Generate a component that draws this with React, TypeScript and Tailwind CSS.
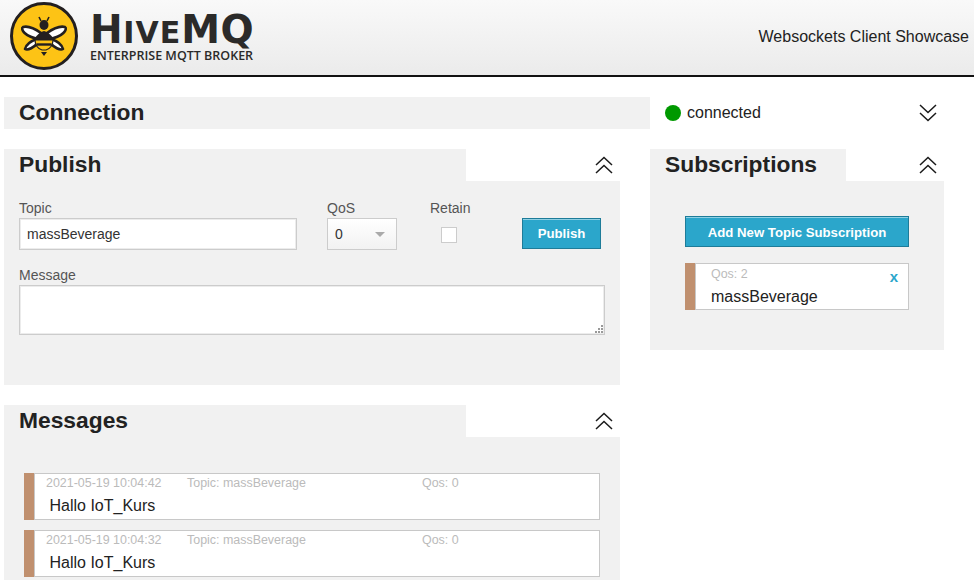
const font = "font-['Liberation_Sans',Arial,sans-serif]";

function Chevrons({ down = false }: { down?: boolean }) {
  return (
    <svg width="18" height="18" viewBox="0 0 18 18" fill="none" stroke="#1a1a1a" strokeWidth="1.5" className={down ? "rotate-180" : ""}>
      <path d="M1 9 L9 1.5 L17 9" />
      <path d="M1 17 L9 9.5 L17 17" />
    </svg>
  );
}

function Bee() {
  return (
    <svg width="68" height="68" viewBox="0 0 68 68" className="shrink-0">
      <circle cx="34" cy="34" r="32.5" fill="#fdc315" stroke="#231f20" strokeWidth="3" />
      <path d="M31 31 C24 26 17 24 13 25 C10 27 15 35 29 37 Z" fill="#fff" stroke="#231f20" strokeWidth="2.6" strokeLinejoin="round" />
      <path d="M37 31 C44 26 51 24 55 25 C58 27 53 35 39 37 Z" fill="#fff" stroke="#231f20" strokeWidth="2.6" strokeLinejoin="round" />
      <path d="M27 37 C21 39 16 43 15 47 C18 49 24 45 28 41 Z" fill="#fff" stroke="#231f20" strokeWidth="2.6" strokeLinejoin="round" />
      <path d="M41 37 C47 39 52 43 53 47 C50 49 44 45 40 41 Z" fill="#fff" stroke="#231f20" strokeWidth="2.6" strokeLinejoin="round" />
      <ellipse cx="34" cy="23" rx="4.5" ry="5" fill="#231f20" />
      <path d="M31 19 L29 15 M37 19 L39 15" stroke="#231f20" strokeWidth="1.6" />
      <path d="M34 29 C28 31 25 35 25 38 L43 38 C43 35 40 31 34 29 Z" fill="#231f20" />
      <path d="M25 38 L43 38 C43 43 40 47 36 48 L32 48 C28 47 25 43 25 38 Z" fill="#fdc315" stroke="#231f20" strokeWidth="1.2" />
      <path d="M26.5 42.5 L41.5 42.5" stroke="#231f20" strokeWidth="2.4" />
      <path d="M31 50 L37 50 L34 54 Z" fill="#231f20" />
    </svg>
  );
}

function Panel({ title, tabClass, chevronClass, bodyClass, children }: { title: string; tabClass: string; chevronClass: string; bodyClass: string; children: React.ReactNode }) {
  return (
    <section>
      <div className="flex h-8">
        <div className={`bg-[#f1f1f1] pl-[15px] flex items-start ${tabClass}`}>
          <h2 className="text-[22.8px] font-bold text-[#222] leading-[31px]">{title}</h2>
        </div>
        <div className={`flex-1 flex items-center justify-end ${chevronClass}`}>
          <Chevrons />
        </div>
      </div>
      <div className={`bg-[#f1f1f1] ${bodyClass}`}>{children}</div>
    </section>
  );
}

function Message({ time }: { time: string }) {
  return (
    <div className="h-[47px] flex border border-[#c8c8c8] border-l-0 bg-white">
      <div className="w-[11px] -my-px bg-[#c0906f] shrink-0 border-r border-[#c8c8c8]" />
      <div className="flex-1">
        <div className="flex text-[12.45px] leading-[17px] text-[#bbb] pl-[11px] h-[18px] items-center">
          <span className="w-[141px]">{time}</span>
          <span className="w-[235px]">Topic: massBeverage</span>
          <span>Qos: 0</span>
        </div>
        <div className="pl-[15px] pt-[3px] text-[16px] leading-[22px] text-[#222] -ml-[0.5px]">Hallo IoT_Kurs</div>
      </div>
    </div>
  );
}

export default function App() {
  return (
    <div className={`w-[974px] h-[580px] overflow-hidden bg-white ${font}`}>
      <header className="h-[77px] border-b-2 border-[#111] bg-gradient-to-b from-[#f9f9f9] to-[#ebebeb] flex items-center justify-between pl-[10px] pr-[5px]">
        <div className="flex items-center mt-[-3px]">
          <Bee />
          <div className="ml-[12px] flex flex-col text-[#2b2a29]">
            <div className="font-['DejaVu_Sans',sans-serif] font-bold text-[39px] leading-[42px] h-[42px] pt-[1px] whitespace-nowrap flex items-baseline tracking-[0.6px]">
              H<span className="text-[30px] tracking-[1px]">IVE</span>MQ
            </div>
            <div className="font-['Open_Sans',sans-serif] text-[12.5px] leading-[16px] font-semibold whitespace-nowrap -mt-[2px]">ENTERPRISE MQTT BROKER</div>
          </div>
        </div>
        <div className="text-[16px] text-[#222] pb-[2px]">Websockets Client Showcase</div>
      </header>

      <div className="flex mt-5 ml-[4px] h-8">
        <div className="w-[646px] bg-[#f1f1f1] pl-[15px] flex items-start">
          <h2 className="text-[22.8px] font-bold text-[#222] leading-[31px]">Connection</h2>
        </div>
        <div className="flex items-center pl-[15px] w-[287px] pb-[1px]">
          <span className="w-4 h-4 rounded-full bg-[#009900]" />
          <span className="ml-[6px] text-[16px] text-[#222]">connected</span>
          <span className="ml-auto flex"><Chevrons down /></span>
        </div>
      </div>

      <div className="flex mt-5 ml-[4px]">
        <div className="w-[616px] flex flex-col gap-5">
          <Panel title="Publish" tabClass="w-[462px]" chevronClass="pr-[7px]" bodyClass="h-[204px] px-[15px] pt-[19px]">
            <div className="flex text-[14px] text-[#555]">
              <label className="w-[308px]">
                <div className="leading-4 h-[18px]">Topic</div>
                <div className="w-[278px] h-[32px] border border-[#ccc] shadow-[inset_0_0_0_1px_#ececec] bg-white pl-[7px] pt-[1px] flex items-center text-[14px] text-[#333]">massBeverage</div>
              </label>
              <label className="w-[103px]">
                <div className="leading-4 h-[18px]">QoS</div>
                <div className="w-[70px] h-[32px] border border-[#ccc] bg-gradient-to-b from-white to-[#f2f2f2] pl-[7px] pr-[11px] pt-[1px] flex items-center justify-between text-[#333]">
                  0
                  <span className="w-0 h-0 border-x-[5px] border-x-transparent border-t-[5px] border-t-[#aaa]" />
                </div>
              </label>
              <div className="w-[92px]">
                <div className="leading-4 h-[18px]">Retain</div>
                <div className="w-4 h-4 border border-[#ccc] bg-white ml-[11px] mt-[9px]" />
              </div>
              <button className="w-[79px] h-[31px] mt-[18px] pt-[1px] bg-[#2ba6cb] border border-[#1e7c99] shadow-[inset_0_1px_0_#8fd0e4] text-white font-bold text-[13.2px]">Publish</button>
            </div>
            <div className="mt-[17px] text-[14px] leading-4 text-[#555] h-[18px]">Message</div>
            <div className="relative w-[586px] h-[50px] border border-[#ccc] shadow-[inset_0_0_0_1px_#ececec] bg-white">
              <svg className="absolute right-0 bottom-0" width="10" height="10" viewBox="0 0 10 10" fill="#999">
                <rect x="7" y="1" width="2" height="2" /><rect x="4" y="4" width="2" height="2" /><rect x="7" y="4" width="2" height="2" />
                <rect x="1" y="7" width="2" height="2" /><rect x="4" y="7" width="2" height="2" /><rect x="7" y="7" width="2" height="2" />
              </svg>
            </div>
          </Panel>
          <Panel title="Messages" tabClass="w-[462px]" chevronClass="pr-[7px]" bodyClass="h-[200px] px-5 pt-9">
            <div className="flex flex-col gap-[10px]">
              <Message time="2021-05-19 10:04:42" />
              <Message time="2021-05-19 10:04:32" />
            </div>
          </Panel>
        </div>
        <div className="w-[294px] ml-[30px]">
          <Panel title="Subscriptions" tabClass="w-[196px]" chevronClass="pr-[7px]" bodyClass="h-[169px] px-[35px] pt-[35px]">
            <button className="w-[224px] h-[31px] pt-[2px] bg-[#2ba6cb] border border-[#1e7c99] shadow-[inset_0_1px_0_#8fd0e4] text-white font-bold text-[13.2px]">Add New Topic Subscription</button>
            <div className="mt-[16px] h-[47px] flex border border-[#c8c8c8] border-l-0 bg-white w-[224px]">
              <div className="w-[11px] -my-px bg-[#c0906f] shrink-0 border-r border-[#c8c8c8]" />
              <div className="flex-1 pl-[15px] relative">
                <div className="text-[12.45px] leading-[17px] h-[21px] text-[#bbb] pt-[2px]">Qos: 2</div>
                <div className="text-[16px] leading-[22px] text-[#222] pt-[1px]">massBeverage</div>
                <span className="absolute right-[10px] top-[4px] text-[#2ba6cb] text-[15px] font-bold leading-[17px]">x</span>
              </div>
            </div>
          </Panel>
        </div>
      </div>
    </div>
  );
}
